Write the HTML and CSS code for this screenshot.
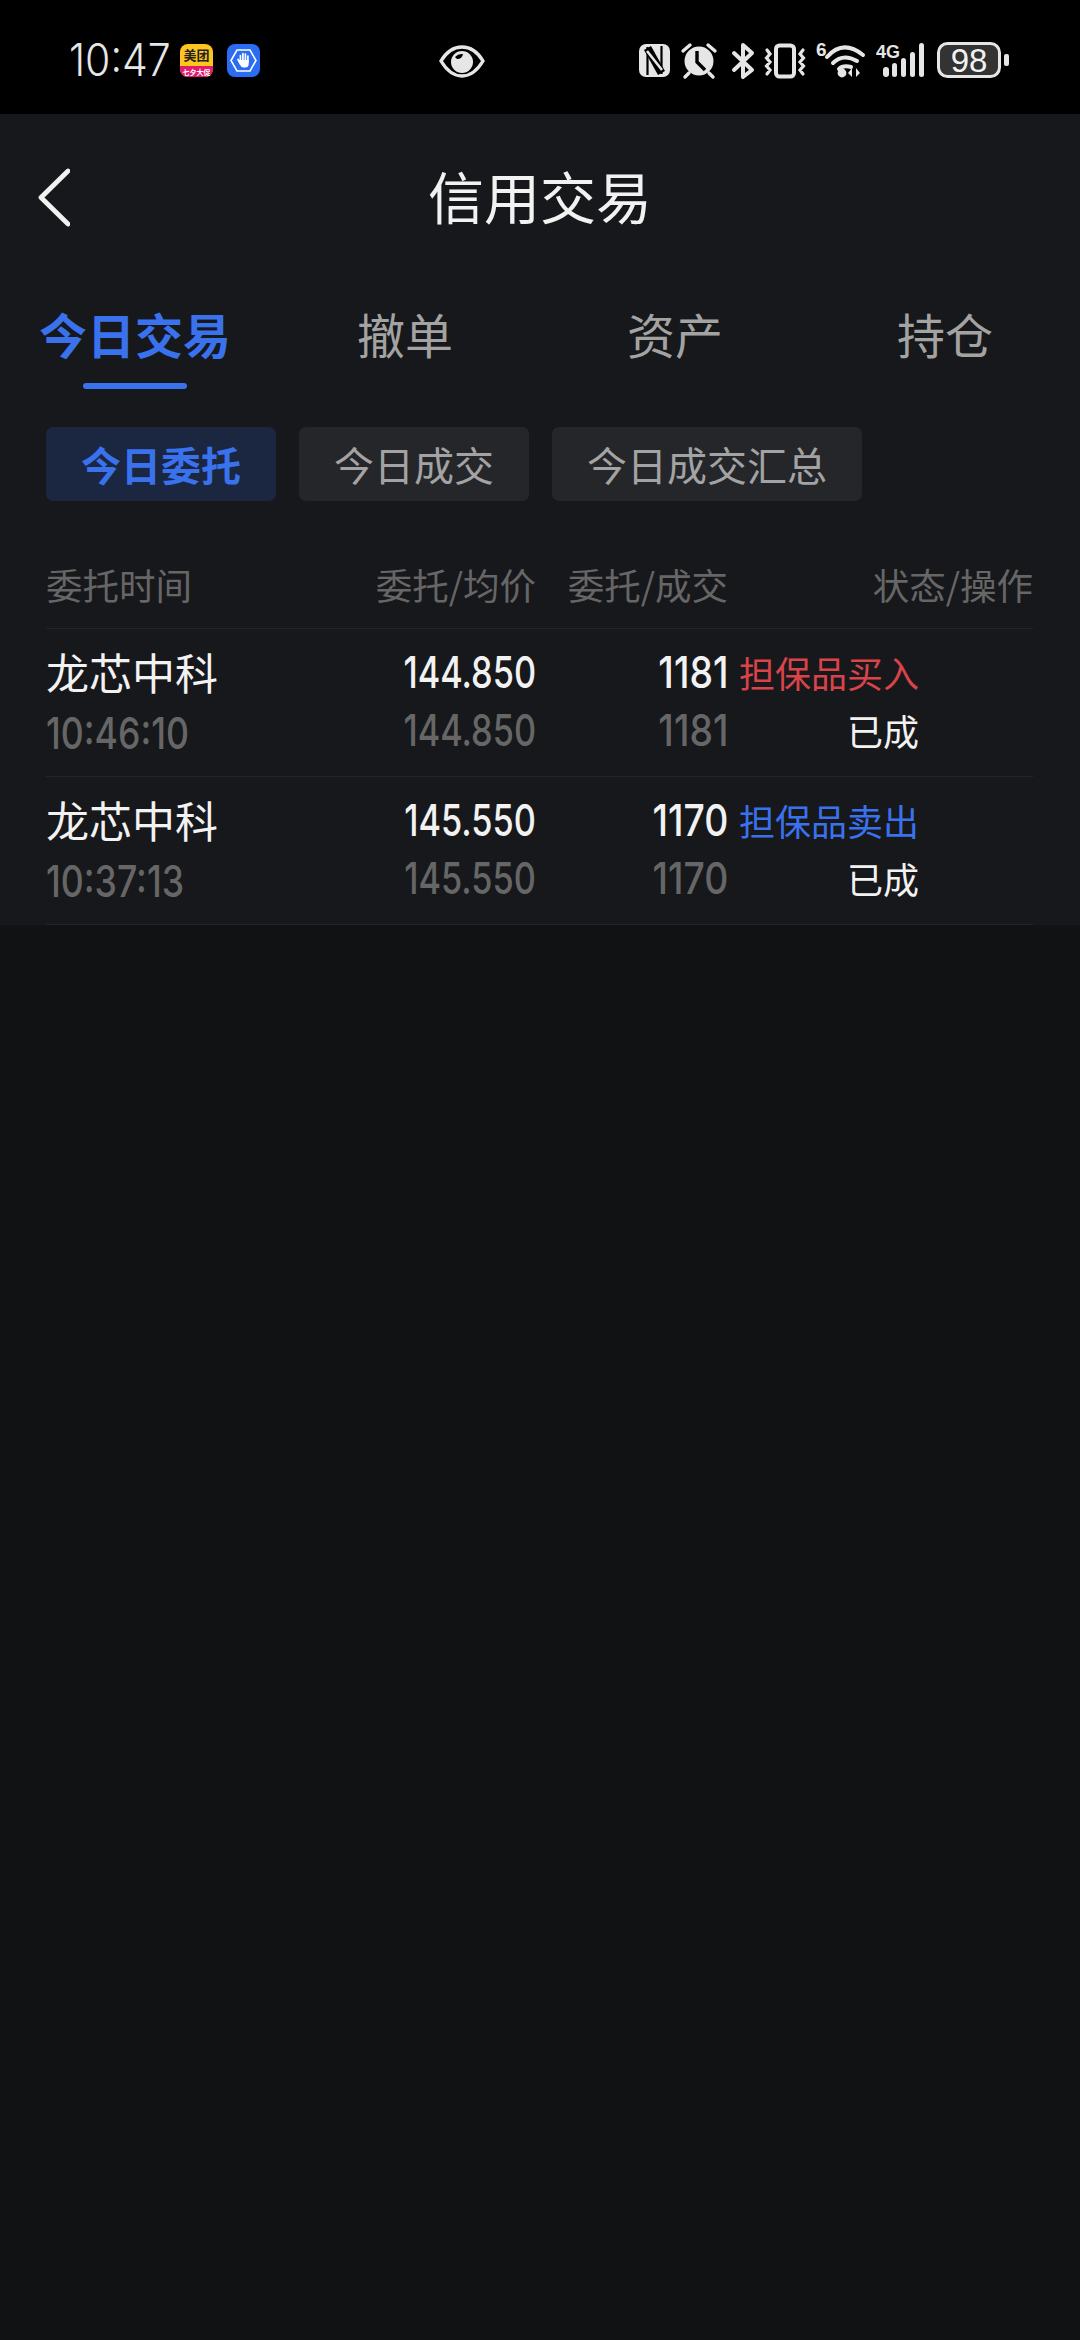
FILE: index.html
```html
<!DOCTYPE html>
<html lang="zh-CN">
<head>
    <meta charset="UTF-8">
    <title>信用交易</title>
    <link rel="stylesheet" href="styles.css">
</head>
<body>
    <div class="status-bar">
        <div class="clock-box"><span class="clock">10:47</span></div>
        <!-- notification icons -->
        <svg class="app-icon" width="33" height="40" viewBox="0 0 33 40">
            <rect y="3" width="33" height="33" rx="8" fill="#fdc51d"/>
            <path d="M0 25 H33 V28 A8 8 0 0 1 25 36 H8 A8 8 0 0 1 0 28 Z" fill="#e2196d"/>
            <text class="mt-logo" x="16.5" y="19" text-anchor="middle">美团</text>
            <text class="mt-promo" x="16.5" y="33.5" text-anchor="middle">七夕大促</text>
        </svg>
        <svg class="app-icon" width="33" height="40" viewBox="0 0 33 40">
            <rect y="3" width="33" height="33" rx="8" fill="#2a6cf2"/>
            <path d="M10 9 H23 L29 19.5 L23 30 H10 L4 19.5 Z" fill="none" stroke="#fff" stroke-width="1.6"/>
            <path d="M13.4 20 V14.5 M15.9 20 V12.5 M18.4 20 V13 M20.9 21 V15 M11 18.5 L13.5 23" fill="none" stroke="#fff" stroke-width="1.7" stroke-linecap="round"/>
            <path d="M12.6 19 H21.7 V23 Q21.7 26.5 18 26.5 H16.5 Q14 26.5 12.9 23.5 Z" fill="#fff"/>
        </svg>
        <svg class="eye-icon" width="46" height="40" viewBox="0 0 46 40">
            <path d="M2 20 C8 10 15 6 23 6 C31 6 38 10 44 20 C38 30 31 35 23 35 C15 35 8 30 2 20 Z" fill="none" stroke="#e6e6e6" stroke-width="3.4"/>
            <circle cx="23" cy="21" r="11" fill="#e6e6e6"/>
            <path d="M18 18 A6 6 0 0 0 24 13 A9 9 0 0 0 16 16 Z" fill="#000"/>
        </svg>

        <div class="status-right">
            <svg width="31" height="40" viewBox="0 0 31 40">
                <rect y="3" width="31" height="33" rx="7" fill="#e6e6e6"/>
                <path d="M8.5 34 V6 M22.5 33 V5" stroke="#000" stroke-width="2.2"/>
                <path d="M8.5 7 L22.5 32" stroke="#000" stroke-width="8"/>
                <path d="M8 10 L23 29" stroke="#e6e6e6" stroke-width="2.6"/>
            </svg>
            <svg width="36" height="40" viewBox="0 0 36 40">
                <circle cx="18" cy="20" r="14.5" fill="#e6e6e6"/>
                <path d="M16 10 V21 L24 29" fill="none" stroke="#000" stroke-width="3.4"/>
                <path d="M2 10 L9 4 M34 10 L27 4 M4 36 L8 32 M32 36 L28 32" stroke="#e6e6e6" stroke-width="3.4" stroke-linecap="round"/>
            </svg>
            <svg class="bt-icon" width="22" height="40" viewBox="0 0 22 40">
                <path d="M2 12 L20 29 L11 36 V4 L20 12 L2 29" fill="none" stroke="#e6e6e6" stroke-width="4" stroke-linecap="round" stroke-linejoin="round"/>
            </svg>
            <svg class="vibrate-icon" width="42" height="40" viewBox="0 0 42 40">
                <rect x="12" y="4.5" width="18" height="31" rx="3.5" fill="none" stroke="#e6e6e6" stroke-width="4"/>
                <path d="M3 9 L6 13 L2.5 17 L6 21 L2.5 25 L6 29 L3 33 M39 9 L36 13 L39.5 17 L36 21 L39.5 25 L36 29 L39 33" fill="none" stroke="#e6e6e6" stroke-width="3.2" stroke-linecap="round"/>
            </svg>
            <svg width="50" height="40" viewBox="0 0 50 40">
                <text class="net-label" x="1" y="15">6</text>
                <path d="M12 16 Q28 -2 48 14 M18 22 Q28 12 42 20 M24 28 Q28 24 36 26" fill="none" stroke="#e6e6e6" stroke-width="4" stroke-linecap="round"/>
                <circle cx="27" cy="32" r="4.4" fill="#e6e6e6"/>
                <path d="M33 32 L37 27 V36 Z M41 27 L45 32 L41 36 Z" fill="#e6e6e6"/>
            </svg>
            <svg width="50" height="40" viewBox="0 0 50 40">
                <text class="net-label" x="0" y="17" textLength="24" lengthAdjust="spacingAndGlyphs">4G</text>
                <rect x="7" y="26" width="6" height="10" rx="3" fill="#e6e6e6"/>
                <rect x="16" y="22" width="5" height="14" rx="2.5" fill="#e6e6e6"/>
                <rect x="25" y="17" width="5" height="19" rx="2.5" fill="#e6e6e6"/>
                <rect x="34" y="11" width="5" height="25" rx="2.5" fill="#e6e6e6"/>
                <rect x="43" y="2" width="5" height="34" rx="2.5" fill="#e6e6e6"/>
            </svg>
            <svg width="72" height="40" viewBox="0 0 72 40">
                <rect x="1.5" y="2.5" width="61" height="33" rx="9" fill="#333" stroke="#e6e6e6" stroke-width="3"/>
                <text class="battery-num" x="32" y="31" text-anchor="middle">98</text>
                <rect x="67" y="13" width="5" height="12" rx="2" fill="#e6e6e6"/>
            </svg>
        </div>
    </div>

    <div class="panel">
        <div class="nav-bar">
            <svg class="back-icon" width="32" height="60" viewBox="0 0 32 60">
                <path d="M30 3 L3 29.5 L30 56" fill="none" stroke="#f2f2f2" stroke-width="4.8" stroke-linecap="round" stroke-linejoin="round"/>
            </svg>
            <div class="nav-title">信用交易</div>
            <div></div>
        </div>

        <div class="tabs">
            <div class="tab active">今日交易<span class="tab-line"></span></div>
            <div class="tab">撤单</div>
            <div class="tab">资产</div>
            <div class="tab">持仓</div>
        </div>

        <div class="pills">
            <div class="pill active">今日委托</div>
            <div class="pill">今日成交</div>
            <div class="pill">今日成交汇总</div>
        </div>

        <div class="table-head">
            <div>委托时间</div>
            <div class="right">委托/均价</div>
            <div class="right">委托/成交</div>
            <div class="right">状态/操作</div>
        </div>

        <div class="order-row">
            <div class="name">龙芯中科</div>
            <div class="num">144.850</div>
            <div class="num qty">1181</div>
            <div class="status-cell buy">担保品买入</div>
            <div class="num sub time">10:46:10</div>
            <div class="num sub">144.850</div>
            <div class="num sub qty">1181</div>
            <div class="status-cell">已成</div>
        </div>
        <div class="order-row">
            <div class="name">龙芯中科</div>
            <div class="num">145.550</div>
            <div class="num qty">1170</div>
            <div class="status-cell sell">担保品卖出</div>
            <div class="num sub time">10:37:13</div>
            <div class="num sub">145.550</div>
            <div class="num sub qty">1170</div>
            <div class="status-cell">已成</div>
        </div>
    </div>
</body>
</html>
```

FILE: styles.css
```css
html {
    overflow: hidden;
}
body {
    margin: 0;
    min-height: 2340px;
    background: #111214;
    font-family: "Noto Sans CJK SC", "Noto Sans", sans-serif;
    color: #f2f2f2;
}

/* status bar */
.status-bar {
    display: flex;
    align-items: flex-start;
    height: 114px;
    box-sizing: border-box;
    padding: 41px 71px 0 69px;
    background: #000;
}
.status-bar svg {
    display: block;
    flex: none;
    overflow: visible;
}
.clock-box {
    width: 100px;
    margin-top: -3px;
}
.clock {
    display: inline-block;
    font-family: Inter, sans-serif;
    font-size: 45px;
    font-weight: 300;
    line-height: 44px;
    color: #e6e6e6;
    transform: scaleX(.91);
    transform-origin: left;
}
.app-icon {
    margin-left: 11px;
}
.app-icon + .app-icon {
    margin-left: 14px;
}
.eye-icon {
    margin-left: 179px;
}
.status-right {
    display: flex;
    align-items: flex-start;
    gap: 11px;
    margin-left: auto;
}
.bt-icon {
    margin: 0 -1px 0 4px;
}
.vibrate-icon {
    margin-right: -2px;
}
.mt-logo {
    font-size: 13px;
    font-weight: 700;
    fill: #222;
}
.mt-promo {
    font-size: 7px;
    font-weight: 700;
    fill: #fff;
}
.net-label {
    font-family: "Liberation Sans", sans-serif;
    font-size: 19px;
    font-weight: 700;
    fill: #e6e6e6;
}
.battery-num {
    font-family: "Liberation Sans", sans-serif;
    font-size: 33px;
    fill: #f2f2f2;
}

/* main panel */
.panel {
    height: 811px;
    background: #17181b;
}
.nav-bar {
    display: grid;
    grid-template-columns: 1fr auto 1fr;
    align-items: center;
    height: 168px;
    padding: 0 38px;
}
.nav-title {
    padding-bottom: 6px;
    font-size: 56px;
    line-height: 60px;
}

.tabs {
    display: grid;
    grid-template-columns: repeat(4, 270px);
    height: 107px;
}
.tab {
    display: flex;
    flex-direction: column;
    align-items: center;
    gap: 22px;
    padding-top: 24px;
    font-size: 48px;
    line-height: 55px;
    color: #a3a3a3;
}
.tab.active {
    font-weight: 700;
    color: #3a72ee;
}
.tab-line {
    width: 104px;
    height: 6px;
    border-radius: 3px;
    background: #3a72ee;
}

.pills {
    display: flex;
    gap: 23px;
    margin-top: 38px;
    padding-left: 46px;
}
.pill {
    height: 74px;
    padding: 0 35px;
    border-radius: 7px;
    background: #25262a;
    font-size: 40px;
    line-height: 74px;
    color: #a3a3a3;
}
.pill.active {
    background: #1b2740;
    font-weight: 700;
    color: #3a72ee;
}

/* order table */
.table-head,
.order-row {
    display: grid;
    grid-template-columns: 300px 190px 192px 305px;
    margin: 0 47px 0 46px;
    border-bottom: 1px solid #242529;
}
.table-head {
    height: 84px;
    margin-top: 43px;
    font-size: 36.5px;
    line-height: 82px;
    color: #666;
}
.right {
    text-align: right;
}
.order-row {
    grid-auto-rows: 58px;
    height: 147px;
    align-content: center;
}
.name {
    font-size: 43px;
    line-height: 52px;
}
/* digits in the reference are a condensed DIN style, so squeeze Inter */
.num {
    justify-self: end;
    font-family: Inter, sans-serif;
    font-size: 44px;
    font-weight: 500;
    line-height: 55px;
    transform: scaleX(.78);
    transform-origin: right;
}
.num.qty {
    transform: scaleX(.85);
}
.sub {
    color: #666;
}
.num.time {
    justify-self: start;
    padding-top: 3px;
    transform: scaleX(.81);
    transform-origin: left;
}
.status-cell {
    padding-right: 114px;
    font-size: 36px;
    line-height: 55px;
    text-align: right;
}
.buy {
    color: #d9434a;
}
.sell {
    color: #3a72ee;
}
```
